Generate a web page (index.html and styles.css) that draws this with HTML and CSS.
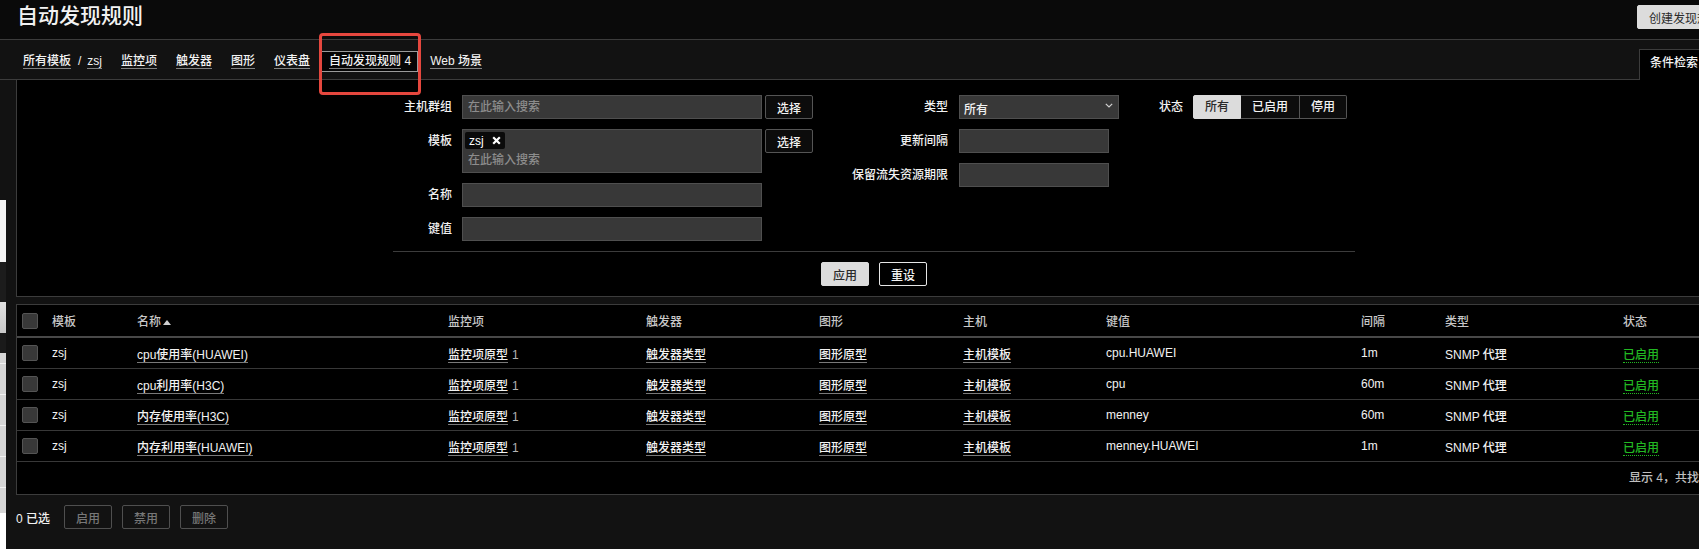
FILE: index.html
```html
<!DOCTYPE html>
<html lang="zh-CN">
<head>
    <meta charset="UTF-8">
    <title>自动发现规则</title>
    <link rel="stylesheet" href="styles.css">
</head>
<body>

<div class="page">
    <header class="header-title">
        <h1>自动发现规则</h1>
        <button class="btn-create">创建发现规则</button>
    </header>

    <div class="nav-row">
        <ul class="breadcrumbs">
            <li><a href="#">所有模板</a><span class="sep">/</span><a href="#">zsj</a></li>
            <li><a href="#">监控项</a></li>
            <li><a href="#">触发器</a></li>
            <li><a href="#">图形</a></li>
            <li><a href="#">仪表盘</a></li>
            <li class="selected"><a href="#">自动发现规则</a> 4</li>
            <li><a href="#">Web 场景</a></li>
        </ul>
        <div class="filter-tab">条件检索</div>
    </div>

    <!-- Filter -->
    <div class="filter">
        <div class="filter-form">
            <div class="form-col col-1">
                <label>主机群组</label>
                <div class="field">
                    <input type="text" class="input w300" placeholder="在此输入搜索">
                    <button class="btn-select">选择</button>
                </div>
                <label>模板</label>
                <div class="field">
                    <div class="multiselect">
                        <span class="chip">zsj
                            <svg width="9" height="9" viewBox="0 0 9 9"><path d="M1.2 1.2 L7.8 7.8 M7.8 1.2 L1.2 7.8" stroke="#fff" stroke-width="2.2"/></svg>
                        </span>
                        <div class="ms-placeholder">在此输入搜索</div>
                    </div>
                    <button class="btn-select">选择</button>
                </div>
                <label>名称</label>
                <div class="field"><input type="text" class="input w300"></div>
                <label>键值</label>
                <div class="field"><input type="text" class="input w300"></div>
            </div>

            <div class="form-col col-2">
                <label>类型</label>
                <div class="field">
                    <div class="select">
                        <span>所有</span>
                        <svg width="8" height="5" viewBox="0 0 8 5"><path d="M0.8 0.8 L4 4 L7.2 0.8" fill="none" stroke="#d0d0d0" stroke-width="1.2"/></svg>
                    </div>
                </div>
                <label>更新间隔</label>
                <div class="field"><input type="text" class="input w150"></div>
                <label>保留流失资源期限</label>
                <div class="field"><input type="text" class="input w150"></div>
            </div>

            <div class="form-col col-3">
                <label>状态</label>
                <ul class="radio-list">
                    <li class="on">所有</li>
                    <li>已启用</li>
                    <li>停用</li>
                </ul>
            </div>
        </div>
        <div class="filter-line"></div>
        <div class="filter-buttons">
            <button class="btn-apply">应用</button>
            <button class="btn-reset">重设</button>
        </div>
    </div>

    <!-- List -->
    <div class="list">
        <table>
            <colgroup>
                <col style="width:30px"><col style="width:85px"><col style="width:311px">
                <col style="width:198px"><col style="width:173px"><col style="width:144px">
                <col style="width:143px"><col style="width:255px"><col style="width:84px">
                <col style="width:178px"><col style="width:113px">
            </colgroup>
            <thead>
                <tr>
                    <th><span class="checkbox"></span></th>
                    <th>模板</th>
                    <th class="sorted">名称<span class="arrow-up"></span></th>
                    <th>监控项</th>
                    <th>触发器</th>
                    <th>图形</th>
                    <th>主机</th>
                    <th>键值</th>
                    <th>间隔</th>
                    <th>类型</th>
                    <th>状态</th>
                </tr>
            </thead>
            <tbody>
                <tr>
                    <td><span class="checkbox"></span></td>
                    <td>zsj</td>
                    <td><a href="#">cpu使用率(HUAWEI)</a></td>
                    <td><a href="#">监控项原型</a><span class="count">1</span></td>
                    <td><a href="#">触发器类型</a></td>
                    <td><a href="#">图形原型</a></td>
                    <td><a href="#">主机模板</a></td>
                    <td>cpu.HUAWEI</td>
                    <td>1m</td>
                    <td>SNMP 代理</td>
                    <td><a href="#" class="green">已启用</a></td>
                </tr>
                <tr>
                    <td><span class="checkbox"></span></td>
                    <td>zsj</td>
                    <td><a href="#">cpu利用率(H3C)</a></td>
                    <td><a href="#">监控项原型</a><span class="count">1</span></td>
                    <td><a href="#">触发器类型</a></td>
                    <td><a href="#">图形原型</a></td>
                    <td><a href="#">主机模板</a></td>
                    <td>cpu</td>
                    <td>60m</td>
                    <td>SNMP 代理</td>
                    <td><a href="#" class="green">已启用</a></td>
                </tr>
                <tr>
                    <td><span class="checkbox"></span></td>
                    <td>zsj</td>
                    <td><a href="#">内存使用率(H3C)</a></td>
                    <td><a href="#">监控项原型</a><span class="count">1</span></td>
                    <td><a href="#">触发器类型</a></td>
                    <td><a href="#">图形原型</a></td>
                    <td><a href="#">主机模板</a></td>
                    <td>menney</td>
                    <td>60m</td>
                    <td>SNMP 代理</td>
                    <td><a href="#" class="green">已启用</a></td>
                </tr>
                <tr>
                    <td><span class="checkbox"></span></td>
                    <td>zsj</td>
                    <td><a href="#">内存利用率(HUAWEI)</a></td>
                    <td><a href="#">监控项原型</a><span class="count">1</span></td>
                    <td><a href="#">触发器类型</a></td>
                    <td><a href="#">图形原型</a></td>
                    <td><a href="#">主机模板</a></td>
                    <td>menney.HUAWEI</td>
                    <td>1m</td>
                    <td>SNMP 代理</td>
                    <td><a href="#" class="green">已启用</a></td>
                </tr>
            </tbody>
            <tfoot>
                <tr>
                    <td colspan="11" class="table-stats">显示 4，共找到 4</td>
                </tr>
            </tfoot>
        </table>
    </div>

    <div class="action-bar">
        <span class="selected-count">0 已选</span>
        <button class="btn-action">启用</button>
        <button class="btn-action">禁用</button>
        <button class="btn-action">删除</button>
    </div>

    <!-- red mark drawn on the screenshot -->
    <div class="annotation"></div>
</div>

<!-- edge of another window showing at the left -->
<div class="edge-strip"></div>

</body>
</html>
```

FILE: styles.css
```css
* {
    box-sizing: border-box;
}

body {
    margin: 0;
    background-color: #121212;
    color: #f2f2f2;
    font-family: "Liberation Sans", "Noto Sans CJK SC", sans-serif;
    font-size: 12px;
    font-weight: 500;
    overflow: hidden;
}

button {
    font: inherit;
    cursor: pointer;
}

a {
    color: #f2f2f2;
    text-decoration: none;
    border-bottom: 1px solid rgba(242, 242, 242, 0.5);
}

.page {
    width: 1748px;
    position: relative;
}

/* Header */
.header-title {
    height: 40px;
    background-color: #0a0a0a;
    border-bottom: 1px solid #3c3c3c;
    display: flex;
    justify-content: space-between;
    align-items: flex-start;
    padding: 0 15px 0 17px;
}

.header-title h1 {
    margin: 4px 0 0;
    font-size: 21px;
    line-height: 24px;
    font-weight: 500;
}

.btn-create {
    margin-top: 5px;
    height: 24px;
    padding: 0 11px;
    background-color: #dcdcdc;
    border: 1px solid #dcdcdc;
    border-radius: 2px;
    color: #2a2a2a;
    font-weight: normal;
}

/* Breadcrumbs + filter tab */
.nav-row {
    height: 40px;
    background-color: #121212;
    border-bottom: 1px solid #3c3c3c;
    display: flex;
    justify-content: space-between;
    padding: 0 16px 0 15px;
}

.breadcrumbs {
    display: flex;
    list-style: none;
    margin: 0;
    padding: 11px 0 0;
}

.breadcrumbs li {
    height: 21px;
    line-height: 19px;
    padding: 0 6px 0 7px;
    margin-right: 4px;
    border: 1px solid transparent;
    color: #f2f2f2;
}

.breadcrumbs li.selected {
    border-color: #9a9a9a;
    background-color: #050505;
}

.breadcrumbs .sep {
    margin: 0 6px 0 7px;
}

.filter-tab {
    align-self: flex-end;
    margin-bottom: -1px;
    width: 93px;
    height: 31px;
    padding: 0 10px;
    line-height: 27px;
    background-color: #000;
    border: 1px solid #3c3c3c;
    border-bottom: none;
    white-space: nowrap;
}

/* Filter */
.filter {
    margin: 0 16px;
    padding: 15px 0 10px;
    background-color: #000;
    border: 1px solid #3c3c3c;
    border-top: none;
}

.filter-form {
    width: 962px;
    margin: 0 auto;
    display: flex;
    align-items: flex-start;
}

.form-col {
    display: grid;
    row-gap: 10px;
    align-items: start;
}

.col-1 {
    width: 420px;
    grid-template-columns: 59px 1fr;
    column-gap: 10px;
}

.col-2 {
    width: 306px;
    grid-template-columns: 135px 1fr;
    column-gap: 11px;
}

.col-3 {
    width: 236px;
    grid-template-columns: 64px 1fr;
    column-gap: 10px;
}

.form-col label {
    text-align: right;
    line-height: 24px;
    white-space: nowrap;
}

.field {
    display: flex;
    align-items: flex-start;
}

.input {
    height: 24px;
    padding: 0 5px;
    background-color: #383838;
    border: 1px solid #4f4f4f;
    color: #f2f2f2;
    font: inherit;
    outline: none;
}

.input::placeholder {
    color: #8c8c8c;
}

.w300 {
    width: 300px;
}

.w150 {
    width: 150px;
}

.btn-select {
    margin-left: 3px;
    width: 48px;
    height: 24px;
    padding: 0;
    background-color: #0c0c0c;
    border: 1px solid #555;
    border-radius: 2px;
    color: #f2f2f2;
}

.multiselect {
    width: 300px;
    height: 44px;
    padding: 2px;
    background-color: #383838;
    border: 1px solid #4f4f4f;
}

.chip {
    display: inline-flex;
    align-items: center;
    gap: 8px;
    height: 17px;
    padding: 0 4px;
    background-color: #0a0a0a;
    border-radius: 2px;
    color: #fff;
}

.ms-placeholder {
    padding-left: 3px;
    line-height: 22px;
    color: #8c8c8c;
}

.select {
    width: 160px;
    height: 24px;
    padding: 0 5px 0 4px;
    background-color: #383838;
    border: 1px solid #4f4f4f;
    display: flex;
    justify-content: space-between;
    align-items: center;
}

.select span {
    padding-top: 3px;
}

.select svg {
    margin-top: -3px;
}

.radio-list {
    display: flex;
    list-style: none;
    margin: 0;
    padding: 0;
}

.radio-list li {
    height: 24px;
    line-height: 22px;
    padding: 0 11px;
    background-color: #0c0c0c;
    border: 1px solid #555;
    border-left: none;
}

.radio-list li:first-child {
    border-left: 1px solid #555;
    border-radius: 2px 0 0 2px;
}

.radio-list li:last-child {
    border-radius: 0 2px 2px 0;
}

.radio-list li.on {
    background-color: #dcdcdc;
    border-color: #dcdcdc;
    color: #2a2a2a;
}

.filter-line {
    width: 962px;
    margin: 10px auto;
    border-top: 1px solid #3c3c3c;
}

.filter-buttons {
    display: flex;
    justify-content: center;
    gap: 10px;
}

.btn-apply,
.btn-reset {
    height: 24px;
    padding: 0 11px;
    border-radius: 2px;
}

.btn-apply {
    background-color: #dcdcdc;
    border: 1px solid #dcdcdc;
    color: #2a2a2a;
}

.btn-reset {
    background-color: #000;
    border: 1px solid #e6e6e6;
    color: #f2f2f2;
}

/* List */
.list {
    margin: 7px 16px 0;
    background-color: #000;
    border: 1px solid #3c3c3c;
}

.list table {
    width: 100%;
    table-layout: fixed;
    border-collapse: separate;
    border-spacing: 0;
}

.list th {
    height: 33px;
    padding: 0 5px;
    text-align: left;
    font-weight: 500;
    color: #c8c8c8;
    border-bottom: 2px solid #484848;
    white-space: nowrap;
}

.list td {
    height: 31px;
    padding: 0 5px;
    border-bottom: 1px solid #383838;
    white-space: nowrap;
}

.list th:first-child,
.list td:first-child {
    line-height: 0;
}

.checkbox {
    display: inline-block;
    width: 16px;
    height: 16px;
    background-color: #383838;
    border: 1px solid #545454;
    border-radius: 2px;
    vertical-align: middle;
}

.arrow-up {
    display: inline-block;
    margin-left: 2px;
    border-left: 4px solid transparent;
    border-right: 4px solid transparent;
    border-bottom: 5px solid #d0d0d0;
    vertical-align: 1px;
}

.count {
    margin-left: 4px;
    color: #b4b4b4;
}

a.green {
    color: #22b822;
    border-bottom: 1px dotted #22b822;
}

.list tfoot td {
    height: 32px;
    border-bottom: none;
    text-align: right;
    padding-right: 10px;
    color: #c0c0c0;
}

/* Action bar */
.action-bar {
    display: flex;
    align-items: center;
    padding: 10px 16px;
}

.selected-count {
    margin-right: 14px;
}

.btn-action {
    height: 24px;
    padding: 0 11px;
    margin-right: 10px;
    background-color: transparent;
    border: 1px solid #4f4f4f;
    border-radius: 2px;
    color: #777;
}

/* Overlays */
.annotation {
    position: absolute;
    left: 319px;
    top: 33px;
    width: 102px;
    height: 62px;
    border: 3px solid #e5473e;
    border-radius: 4px;
}

.edge-strip {
    position: absolute;
    left: 0;
    top: 200px;
    width: 6px;
    height: 349px;
    background: linear-gradient(to bottom,
        #f4f4f4 0, #f4f4f4 62px,
        #1c1c1c 62px, #1c1c1c 102px,
        #e0e0e0 102px, #c8c8c8 133px,
        #1a1a1a 133px, #1a1a1a 153px,
        #d6d6d6 153px, #d6d6d6 313px,
        #ffffff 313px, #ffffff 349px);
}

.edge-strip::after {
    content: "";
    position: absolute;
    left: 0;
    top: 163px;
    width: 6px;
    height: 126px;
    background: repeating-linear-gradient(to bottom,
        #f2f2f2 0, #f2f2f2 1px,
        transparent 1px, transparent 31px);
}
```
